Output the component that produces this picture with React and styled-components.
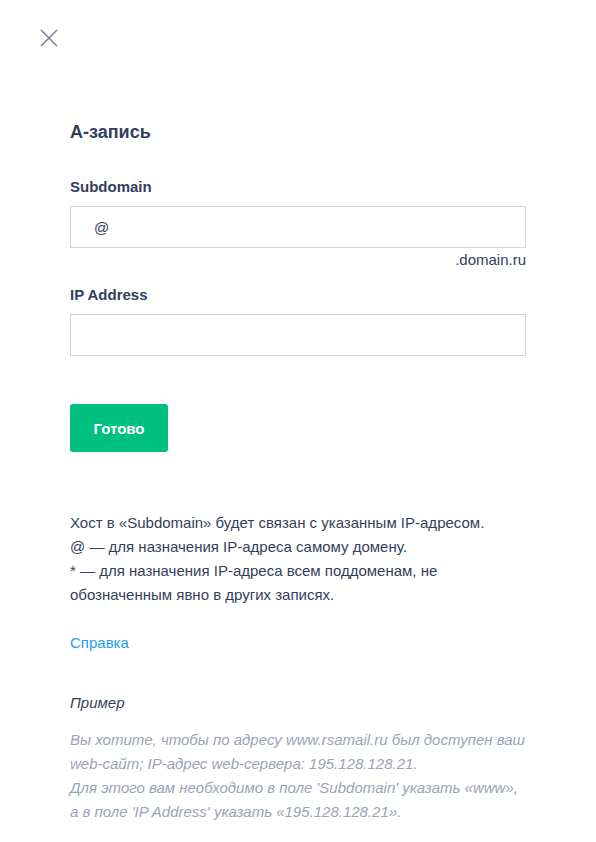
import React from "react";
import styled, { createGlobalStyle } from "styled-components";

const Global = createGlobalStyle`
  html, body { margin: 0; padding: 0; background: #fff; }
  body { font-family: "Liberation Sans", Arial, sans-serif; color: #333e5d; }
  * { box-sizing: border-box; }
`;

const Page = styled.div`
  width: 596px;
  min-height: 842px;
  padding: 28px 0 0 0;
  background: #fff;
`;

const CloseButton = styled.button`
  display: block;
  margin-left: 39px;
  width: 20px;
  height: 20px;
  padding: 0;
  border: none;
  background: transparent;
  cursor: pointer;
  svg { display: block; }
`;

const Content = styled.div`
  width: 456px;
  margin: 72px 0 0 70px;
  display: flex;
  flex-direction: column;
`;

const Title = styled.h2`
  margin: 0;
  font-size: 18px;
  line-height: 24px;
  font-weight: 700;
  color: #333e5d;
`;

const Field = styled.div`
  display: flex;
  flex-direction: column;
  margin-top: ${(p) => p.$top}px;
`;

const Label = styled.label`
  font-size: 15px;
  line-height: 20px;
  font-weight: 700;
  color: #333e5d;
  margin-bottom: 9px;
`;

const Input = styled.input`
  height: 42px;
  width: 100%;
  border: 1px solid #cfd3df;
  border-radius: 0;
  padding: 0 23px;
  font-family: "Liberation Sans", Arial, sans-serif;
  font-size: 15px;
  color: #333e5d;
  outline: none;
  background: #fff;
`;

const Suffix = styled.div`
  margin-top: 2px;
  text-align: right;
  font-size: 15px;
  line-height: 20px;
  color: #333e5d;
`;

const Submit = styled.button`
  margin-top: 48px;
  align-self: flex-start;
  width: 98px;
  height: 48px;
  border: none;
  border-radius: 3px;
  background: #00c07f;
  color: #fff;
  font-family: "Liberation Sans", Arial, sans-serif;
  font-size: 15px;
  font-weight: 700;
  cursor: pointer;
`;

const Text = styled.p`
  margin: ${(p) => p.$top}px 0 0 0;
  font-size: 15px;
  line-height: 24px;
  color: #333e5d;
`;

const Link = styled.a`
  margin-top: 24px;
  font-size: 15px;
  line-height: 24px;
  color: #1f9ee8;
  text-decoration: none;
  align-self: flex-start;
`;

const ExampleTitle = styled.div`
  margin-top: 36px;
  font-size: 15px;
  line-height: 24px;
  font-style: italic;
  color: #333e5d;
`;

const ExampleText = styled.p`
  margin: 13px 0 0 0;
  font-size: 15px;
  line-height: 24px;
  font-style: italic;
  color: #9aa3b9;
`;

export default function App() {
  return (
    <>
      <Global />
      <Page>
        <CloseButton aria-label="Закрыть">
          <svg width="20" height="20" viewBox="0 0 20 20">
            <path d="M2 2 L18 18 M18 2 L2 18" stroke="#7a8399" strokeWidth="1.6" fill="none" />
          </svg>
        </CloseButton>
        <Content>
          <Title>А-запись</Title>
          <Field $top={33}>
            <Label>Subdomain</Label>
            <Input defaultValue="@" />
            <Suffix>.domain.ru</Suffix>
          </Field>
          <Field $top={15}>
            <Label>IP Address</Label>
            <Input />
          </Field>
          <Submit>Готово</Submit>
          <Text $top={59}>
            Хост в «Subdomain» будет связан с указанным IP-адресом.
            <br />
            @ — для назначения IP-адреса самому домену.
            <br />
            * — для назначения IP-адреса всем поддоменам, не обозначенным явно в других записях.
          </Text>
          <Link href="#">Справка</Link>
          <ExampleTitle>Пример</ExampleTitle>
          <ExampleText>
            Вы хотите, чтобы по адресу www.rsamail.ru был доступен ваш web-сайт; IP-адрес web-сервера: 195.128.128.21.
            <br />
            Для этого вам необходимо в поле 'Subdomain' указать «www», а в поле 'IP Address' указать «195.128.128.21».
          </ExampleText>
        </Content>
      </Page>
    </>
  );
}
